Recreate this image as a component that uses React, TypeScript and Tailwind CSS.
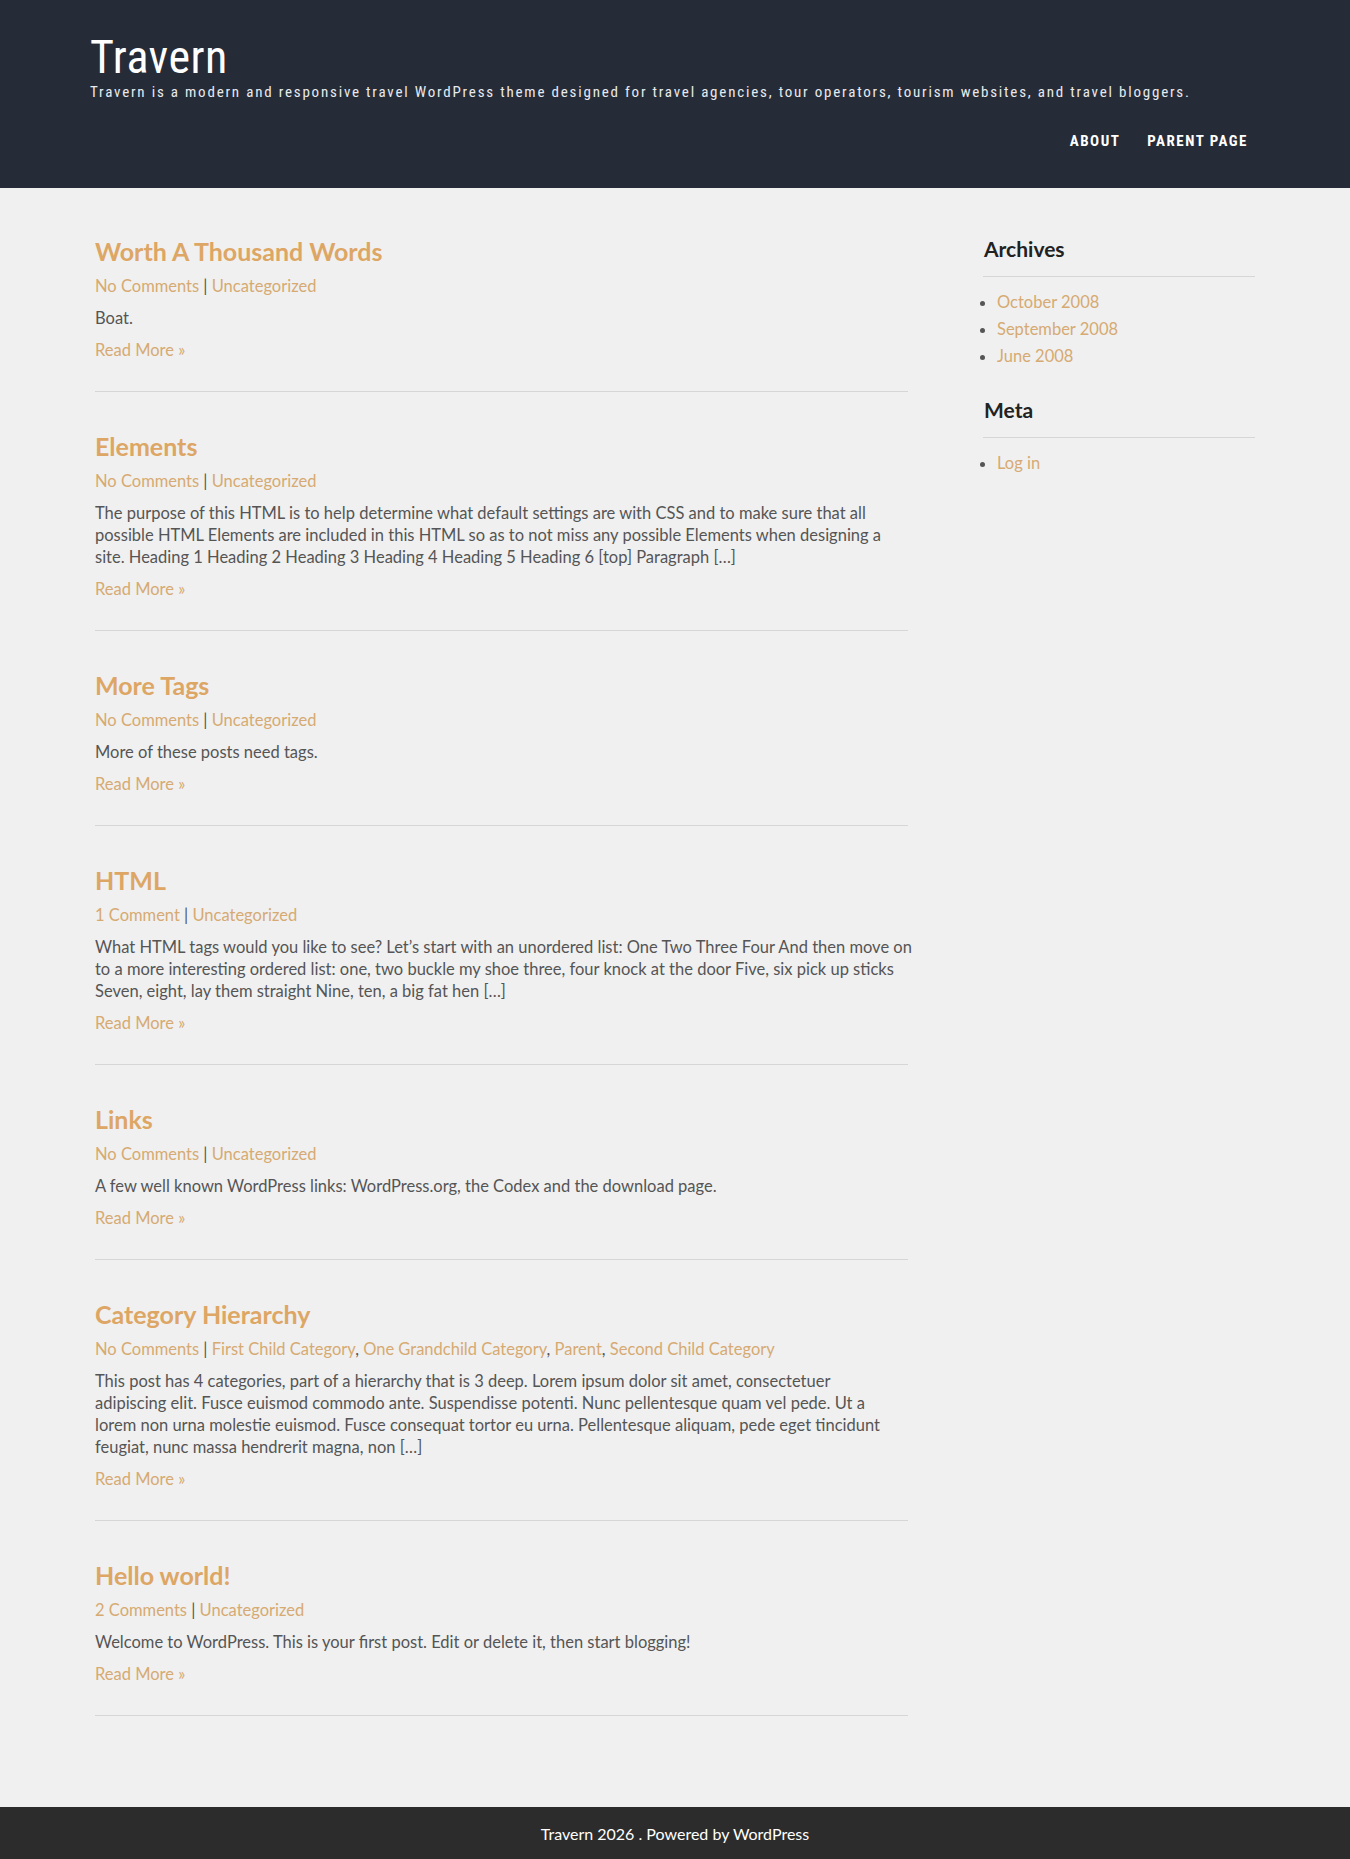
import React from "react";

type Post = {
  title: string;
  comments: string;
  cats: string[];
  lines: string[];
};

const posts: Post[] = [
  { title: "Worth A Thousand Words", comments: "No Comments", cats: ["Uncategorized"], lines: ["Boat."] },
  {
    title: "Elements",
    comments: "No Comments",
    cats: ["Uncategorized"],
    lines: [
      "The purpose of this HTML is to help determine what default settings are with CSS and to make sure that all",
      "possible HTML Elements are included in this HTML so as to not miss any possible Elements when designing a",
      "site. Heading 1 Heading 2 Heading 3 Heading 4 Heading 5 Heading 6 [top] Paragraph […]",
    ],
  },
  { title: "More Tags", comments: "No Comments", cats: ["Uncategorized"], lines: ["More of these posts need tags."] },
  {
    title: "HTML",
    comments: "1 Comment",
    cats: ["Uncategorized"],
    lines: [
      "What HTML tags would you like to see? Let’s start with an unordered list: One Two Three Four And then move on",
      "to a more interesting ordered list: one, two buckle my shoe three, four knock at the door Five, six pick up sticks",
      "Seven, eight, lay them straight Nine, ten, a big fat hen […]",
    ],
  },
  {
    title: "Links",
    comments: "No Comments",
    cats: ["Uncategorized"],
    lines: ["A few well known WordPress links: WordPress.org, the Codex and the download page."],
  },
  {
    title: "Category Hierarchy",
    comments: "No Comments",
    cats: ["First Child Category", "One Grandchild Category", "Parent", "Second Child Category"],
    lines: [
      "This post has 4 categories, part of a hierarchy that is 3 deep. Lorem ipsum dolor sit amet, consectetuer",
      "adipiscing elit. Fusce euismod commodo ante. Suspendisse potenti. Nunc pellentesque quam vel pede. Ut a",
      "lorem non urna molestie euismod. Fusce consequat tortor eu urna. Pellentesque aliquam, pede eget tincidunt",
      "feugiat, nunc massa hendrerit magna, non […]",
    ],
  },
  {
    title: "Hello world!",
    comments: "2 Comments",
    cats: ["Uncategorized"],
    lines: ["Welcome to WordPress. This is your first post. Edit or delete it, then start blogging!"],
  },
];

const cond = { fontFamily: '"Liberation Sans Narrow", "Roboto Condensed", Roboto, sans-serif' };
const body = { fontFamily: 'Lato, "Open Sans", sans-serif' };

export default function App() {
  return (
    <div className="min-h-[1859px] bg-[#f0f0f0] flex flex-col" style={body}>
      <header className="h-[188px] bg-[#252c38] text-white">
        <div className="w-[1170px] mx-auto pt-[32px] flex flex-col" style={cond}>
          <div className="text-[46px] leading-[50px] tracking-[0.5px] text-white">Travern</div>
          <div className="text-[15px] leading-[20px] tracking-[1.8px] text-[#e8eaee]">
            Travern is a modern and responsive travel WordPress theme designed for travel agencies, tour operators, tourism websites, and travel bloggers.
          </div>
          <nav className="mt-[29px] flex justify-end gap-[27px] pr-[12px] text-[15px] leading-[20px] font-bold tracking-[1.5px] text-white">
            <a>ABOUT</a>
            <a>PARENT PAGE</a>
          </nav>
        </div>
      </header>

      <main className="flex-1 w-[1170px] mx-auto px-[5px] pt-[48px] flex">
        <div className="w-[813px]">
          {posts.map((p) => (
            <article key={p.title} className="border-b border-[#d6d6d6] pb-[30px] mb-[39px]">
              <h2 className="text-[25px] leading-[30px] font-bold text-[#dda664]">{p.title}</h2>
              <div className="mt-[9px] text-[16.5px] leading-[22px] text-[#555]">
                <a className="text-[#d6aa72]">{p.comments}</a>
                <span> | </span>
                {p.cats.map((c, i) => (
                  <React.Fragment key={c}>
                    <a className="text-[#d6aa72]">{c}</a>
                    {i < p.cats.length - 1 && <span>, </span>}
                  </React.Fragment>
                ))}
              </div>
              <p className="mt-[10px] text-[16.5px] leading-[22px] whitespace-nowrap text-[#555]">
                {p.lines.map((l, i) => (
                  <React.Fragment key={i}>
                    {l}
                    {i < p.lines.length - 1 && <br />}
                  </React.Fragment>
                ))}
              </p>
              <a className="block mt-[10px] text-[16.5px] leading-[22px] text-[#d6aa72]">Read More »</a>
            </article>
          ))}
        </div>

        <aside className="w-[272px] ml-auto">
          <h3 className="text-[21px] leading-[26px] font-bold text-[#222] pl-[1px] pb-[14px] border-b border-[#d6d6d6]">Archives</h3>
          <ul className="mt-[12px] pl-[14px] list-disc text-[16.5px] leading-[27px] text-[#555]">
            <li><a className="text-[#d6aa72]">October 2008</a></li>
            <li><a className="text-[#d6aa72]">September 2008</a></li>
            <li><a className="text-[#d6aa72]">June 2008</a></li>
          </ul>
          <h3 className="mt-[27px] text-[21px] leading-[26px] font-bold text-[#222] pl-[1px] pb-[14px] border-b border-[#d6d6d6]">Meta</h3>
          <ul className="mt-[12px] pl-[14px] list-disc text-[16.5px] leading-[27px] text-[#555]">
            <li><a className="text-[#d6aa72]">Log in</a></li>
          </ul>
        </aside>
      </main>

      <footer className="h-[53px] mt-[52px] bg-[#2c2c2c] flex items-center justify-center text-[16px] text-white">
        Travern 2026 . Powered by WordPress
      </footer>
    </div>
  );
}
